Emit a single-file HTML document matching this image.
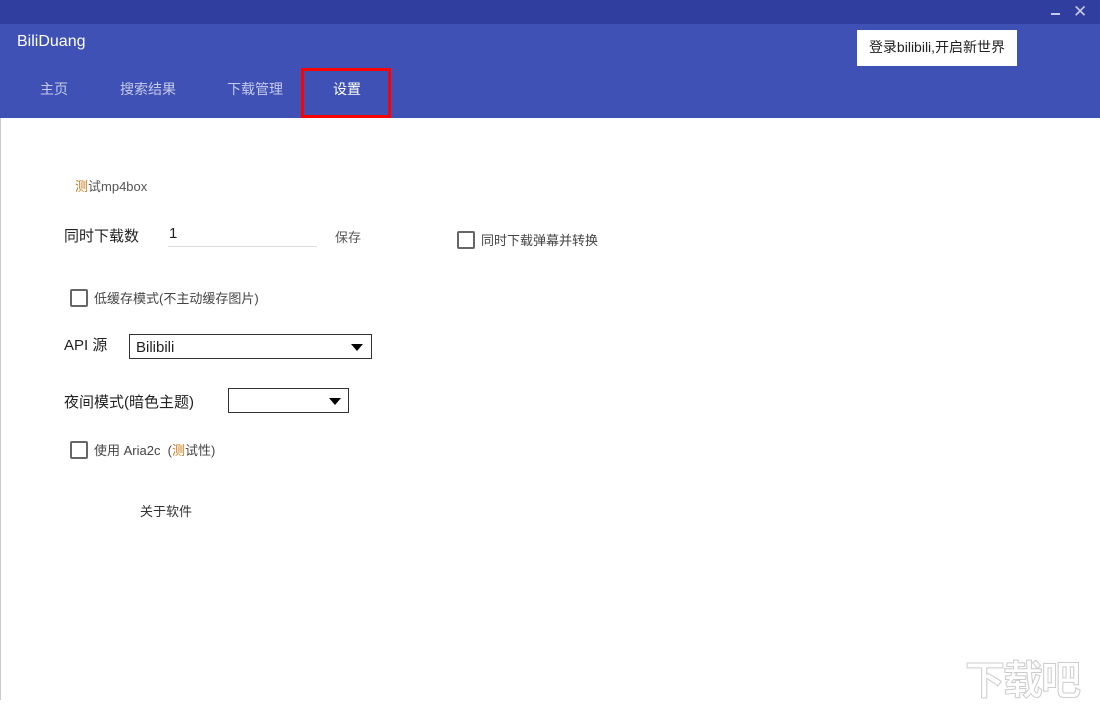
<!DOCTYPE html>
<html><head><meta charset="utf-8"><style>
*{margin:0;padding:0;box-sizing:border-box}
body{width:1100px;height:700px;overflow:hidden;background:#fff;font-family:"Liberation Sans","Noto Sans CJK SC",sans-serif;position:relative;color:#222}
.a{position:absolute;white-space:nowrap}
.cb{position:absolute;width:18px;height:18px;border:2px solid #666;border-radius:2px}
</style></head><body>
<div class="a" style="left:0;top:0;width:1100px;height:24px;background:#303f9f"></div>
<div class="a" style="left:0;top:24px;width:1100px;height:94px;background:#3f51b5"></div>
<div class="a" style="left:1051px;top:13px;width:9px;height:2px;background:#c5cae9"></div>
<div class="a" style="left:1073px;top:2px;color:#c5cae9;font-size:17px">✕</div>
<div class="a" style="left:17px;top:33px;color:#fff;font-size:16px">BiliDuang</div>
<div class="a" style="left:857px;top:30px;width:160px;height:36px;background:#fff;font-size:14px;line-height:34px;text-align:center;color:#222">登录bilibili,开启新世界</div>
<div class="a" style="left:40px;top:79px;color:#c5cae9;font-size:14px">主页</div>
<div class="a" style="left:120px;top:79px;color:#c5cae9;font-size:14px">搜索结果</div>
<div class="a" style="left:227px;top:79px;color:#c5cae9;font-size:14px">下载管理</div>
<div class="a" style="left:333px;top:79px;color:#fff;font-size:14px">设置</div>
<div class="a" style="left:301px;top:68px;width:90px;height:50px;border:3px solid #f00"></div>
<div class="a" style="left:0;top:118px;width:1px;height:582px;background:#ccc"></div>
<div class="a" style="left:75px;top:176px;font-size:13px;color:#555"><span style="color:#c77a1c">测</span>试mp4box</div>
<div class="a" style="left:64px;top:225px;font-size:15px">同时下载数</div>
<div class="a" style="left:169px;top:225px;font-size:15px">1</div>
<div class="a" style="left:168px;top:246px;width:149px;height:1px;background:#ddd"></div>
<div class="a" style="left:335px;top:227px;font-size:13px;color:#555">保存</div>
<div class="cb" style="left:457px;top:231px"></div>
<div class="a" style="left:481px;top:230px;font-size:13px;color:#444">同时下载弹幕并转换</div>
<div class="cb" style="left:70px;top:289px"></div>
<div class="a" style="left:94px;top:288px;font-size:13px;color:#444">低缓存模式(不主动缓存图片)</div>
<div class="a" style="left:64px;top:334px;font-size:15px">API 源</div>
<div class="a" style="left:129px;top:334px;width:243px;height:25px;border:1px solid #333;font-size:15px;padding-left:6px;line-height:25px">Bilibili</div>
<div class="a" style="left:351px;top:344px;border-left:6px solid transparent;border-right:6px solid transparent;border-top:7px solid #000"></div>
<div class="a" style="left:64px;top:391px;font-size:15px">夜间模式(暗色主题)</div>
<div class="a" style="left:228px;top:388px;width:121px;height:25px;border:1px solid #333"></div>
<div class="a" style="left:329px;top:398px;border-left:6px solid transparent;border-right:6px solid transparent;border-top:7px solid #000"></div>
<div class="cb" style="left:70px;top:441px"></div>
<div class="a" style="left:94px;top:440px;font-size:13px;color:#444">使用 Aria2c &nbsp;(<span style="color:#c77a1c">测</span>试性)</div>
<div class="a" style="left:140px;top:501px;font-size:13px;color:#333">关于软件</div>
<div class="a" style="left:965px;top:648px;font-size:40px;font-weight:bold;color:#fff;-webkit-text-stroke:1px #ccc;letter-spacing:-2px">下载吧</div>
</body></html>
